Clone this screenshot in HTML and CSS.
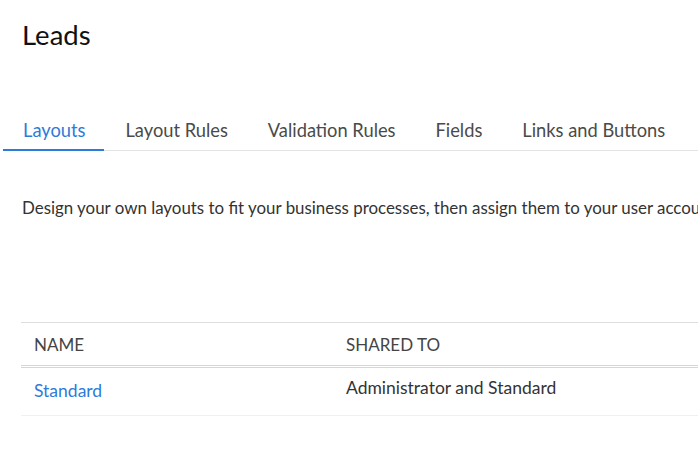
FILE: index.html
```html
<!DOCTYPE html>
<html>
<head>
<meta charset="utf-8">
<link rel="stylesheet" href="styles.css">
</head>
<body>
<div class="page">
  <h1 class="title">Leads</h1>
  <nav class="tabs">
    <a class="tab active">Layouts</a>
    <a class="tab">Layout Rules</a>
    <a class="tab">Validation Rules</a>
    <a class="tab">Fields</a>
    <a class="tab">Links and Buttons</a>
  </nav>
  <p class="desc">Design your own layouts to fit your business processes, then assign them to your user accounts based on their profiles.</p>
  <table class="grid">
    <thead>
      <tr><th class="c1">NAME</th><th class="c2">SHARED TO</th></tr>
    </thead>
    <tbody>
      <tr><td class="c1 name"><a class="link">Standard</a></td><td class="c2 shared">Administrator and Standard</td></tr>
    </tbody>
  </table>
</div>
</body>
</html>
```
FILE: styles.css
```css
html, body { margin: 0; padding: 0; background: #fff; }
body { font-family: Lato, "Open Sans", sans-serif; color: #333; overflow: hidden; width: 698px; }
.page { width: 698px; overflow: hidden; }
.title {
  margin: 0;
  padding: 16px 0 0 22px;
  font-family: Lato, sans-serif;
  font-weight: 400;
  font-size: 27.5px;
  line-height: 38px;
  color: #111;
}
.tabs {
  display: flex;
  margin: 59px 0 0 3px;
  border-bottom: 1px solid #e3e3e3;
  white-space: nowrap;
}
.tab {
  font-size: 18.3px;
  line-height: 22px;
  padding: 6px 0 8px;
  margin-right: 40px;
  color: #4a4a4a;
  border-bottom: 2px solid transparent;
  margin-bottom: -1px;
}
.tab:first-child { padding-left: 20px; padding-right: 19px; margin-right: 21px; }
.tab.active { color: #2d7bd8; border-bottom-color: #2d7bd8; }
.desc {
  margin: 46px 0 0 22px;
  font-size: 16.9px;
  line-height: 22px;
  white-space: nowrap;
  color: #333;
}
.grid {
  margin: 103px 0 0 21px;
  border-collapse: collapse;
  width: 720px;
  table-layout: fixed;
}
.grid th, .grid td { text-align: left; padding: 0; font-weight: 400; }
.grid th {
  height: 42px;
  font-size: 17px;
  color: #444;
  border-top: 1px solid #dedede;
  border-bottom: 3px double #d6d6d6;
  vertical-align: middle;
}
.grid td {
  font-size: 17.5px;
  line-height: 22px;
  border-bottom: 1px solid #f0f0f0;
  vertical-align: top;
}
.c1 { width: 312px; padding-left: 13px !important; }
.c2 { padding-left: 0 !important; }
.link { color: #2d7bd8; }
.grid td.name { height: 35px; padding-top: 12px; }
.grid td.shared { color: #333; height: 38px; padding-top: 9px; }
```
